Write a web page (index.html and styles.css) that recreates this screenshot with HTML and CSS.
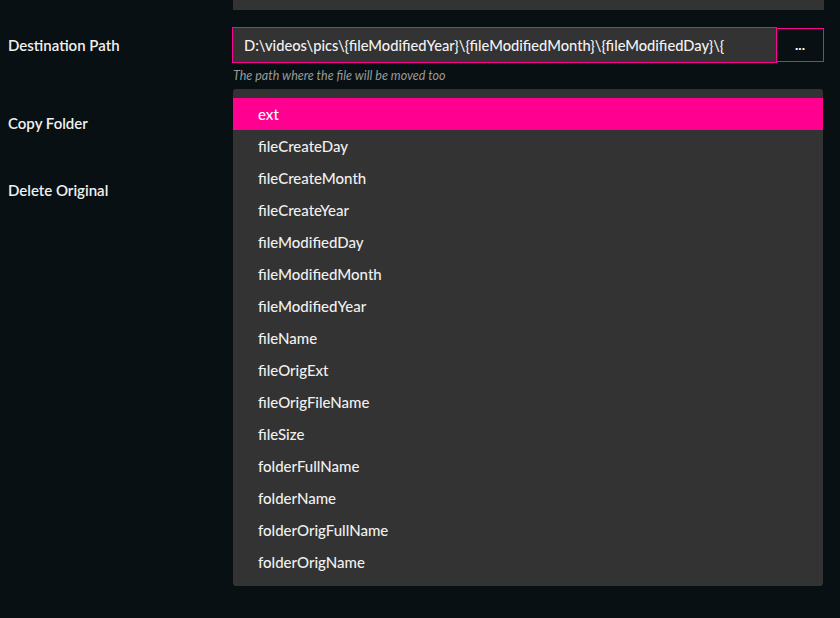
FILE: index.html
```html
<!DOCTYPE html>
<html lang="en">
<head>
    <meta charset="UTF-8">
    <meta name="viewport" content="width=device-width, initial-scale=1.0">
    <title>Move Rule</title>
    <link rel="stylesheet" href="styles.css">
</head>
<body>
    <div class="form">
        <div class="row row-top">
            <div class="label"></div>
            <div class="field"><div class="top-box"></div></div>
        </div>

        <div class="row row-dest">
            <div class="label">Destination Path</div>
            <div class="field">
                <div class="input-group">
                    <div class="path-input">D:\videos\pics\{fileModifiedYear}\{fileModifiedMonth}\{fileModifiedDay}\{</div>
                    <button class="browse">...</button>
                </div>
                <div class="help">The path where the file will be moved too</div>
                <ul class="dropdown">
                    <li class="active">ext</li>
                    <li>fileCreateDay</li>
                    <li>fileCreateMonth</li>
                    <li>fileCreateYear</li>
                    <li>fileModifiedDay</li>
                    <li>fileModifiedMonth</li>
                    <li>fileModifiedYear</li>
                    <li>fileName</li>
                    <li>fileOrigExt</li>
                    <li>fileOrigFileName</li>
                    <li>fileSize</li>
                    <li>folderFullName</li>
                    <li>folderName</li>
                    <li>folderOrigFullName</li>
                    <li>folderOrigName</li>
                </ul>
            </div>
        </div>

        <div class="row row-copy">
            <div class="label">Copy Folder</div>
        </div>
        <div class="row row-delete">
            <div class="label">Delete Original</div>
        </div>
    </div>
</body>
</html>
```

FILE: styles.css
```css
body {
    margin: 0;
    background: #081013;
    color: #f0f0f0;
    font-family: Lato, "Noto Sans", sans-serif;
    font-size: 15px;
    height: 618px;
    overflow: hidden;
}
.form {
    position: relative;
    padding: 0 16px 0 8px;
}
.row {
    display: flex;
}
.label {
    width: 224px;
    flex: none;
    font-weight: 600;
}
.field {
    flex: 1;
}
.top-box {
    height: 10px;
    margin-left: 1px;
    background: #333;
}
.row-dest {
    margin-top: 17px;
}
.row-dest .label {
    line-height: 36px;
}
.input-group {
    display: flex;
    align-items: center;
    height: 36px;
}
.path-input {
    flex: 1;
    box-sizing: border-box;
    height: 36px;
    line-height: 34px;
    padding: 0 11px;
    background: #333;
    border: 1px solid #ff0090;
    color: #f2f2f2;
    font-weight: 500;
    font-size: 14.7px;
    white-space: nowrap;
    overflow: hidden;
}
.browse {
    box-sizing: border-box;
    width: 47px;
    height: 34px;
    margin: 0;
    padding: 0;
    border: 1px solid #ff0090;
    border-left: none;
    background: #081013;
    color: #fff;
    font-family: inherit;
    font-weight: 700;
    font-size: 14px;
    line-height: 28px;
}
.help {
    margin: 4px 0 0 1px;
    font-size: 12.5px;
    font-style: italic;
    color: #9a9a9a;
    line-height: 18px;
}
.dropdown {
    position: absolute;
    left: 233px;
    right: 17px;
    top: 89px;
    margin: 0;
    padding: 9px 0 8px;
    list-style: none;
    background: #333;
    border-radius: 3px;
    z-index: 2;
}
.dropdown li {
    height: 32px;
    line-height: 32px;
    padding-left: 25px;
    color: #f0f0f0;
    font-weight: 500;
}
.dropdown li.active {
    background: #ff0090;
    color: #fff;
}
.row-copy {
    margin-top: 29px;
}
.row-delete {
    margin-top: 49px;
}
```
